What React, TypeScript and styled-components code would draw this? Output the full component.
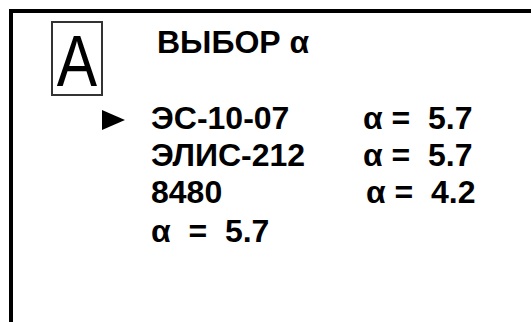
import styled, { createGlobalStyle } from "styled-components";

interface Row {
  name: string;
  value: string;
  selected?: boolean;
  shift?: number;
}

const rows: Row[] = [
  { name: "ЭС-10-07", value: "α =  5.7", selected: true },
  { name: "ЭЛИС-212", value: "α =  5.7" },
  { name: "8480", value: "α =  4.2", shift: 3 },
];

const App = () => {
  return (
    <>
      <GlobalStyle />
      <Frame>
        <Header>
          <ModeBox>
            <ModeLetter>A</ModeLetter>
          </ModeBox>
          <Title>ВЫБОР α</Title>
        </Header>
        <List>
          {rows.map((row) => (
            <ListRow key={row.name}>
              <Marker>
                {row.selected && (
                  <svg width="23" height="20" viewBox="0 0 23 20">
                    <polygon points="0,0 23,10 0,20" fill="#000" />
                  </svg>
                )}
              </Marker>
              <Cell>{row.name}</Cell>
              <Cell $shift={row.shift ?? 0}>{row.value}</Cell>
            </ListRow>
          ))}
          <Current>α  =  5.7</Current>
        </List>
      </Frame>
    </>
  );
};

const GlobalStyle = createGlobalStyle`
  html, body {
    margin: 0;
    padding: 0;
    background: #fff;
    overflow: hidden;
  }
  body {
    font-family: "Liberation Sans", Arial, sans-serif;
    color: #000;
  }
`;

const Frame = styled.div`
  margin: 9px 0 0 9px;
  width: 522px;
  height: 313px;
  border-top: 4px solid #000;
  border-left: 4px solid #000;
  box-sizing: border-box;
  padding: 8px 0 0 38px;
`;

const Header = styled.div`
  display: flex;
  align-items: flex-start;
`;

const ModeBox = styled.div`
  width: 52px;
  height: 75px;
  box-sizing: border-box;
  border: 2px solid #333;
  display: flex;
  align-items: center;
  justify-content: center;
`;

const ModeLetter = styled.span`
  font-size: 72px;
  line-height: 72px;
  font-weight: 400;
  transform: scaleX(0.84);
  margin-top: 4px;
`;

const Title = styled.h1`
  margin: 4px 0 0 54px;
  font-size: 32px;
  line-height: 34px;
  font-weight: 700;
`;

const List = styled.div`
  margin: 4px 0 0 51px;
  display: grid;
  grid-template-columns: 49px 212px auto;
  font-size: 32px;
  font-weight: 700;
  line-height: 37px;
`;

const ListRow = styled.div`
  display: contents;
`;

const Marker = styled.div`
  display: flex;
  align-items: center;
  padding-top: 2px;
`;

const Cell = styled.div<{ $shift?: number }>`
  white-space: pre;
  padding-left: ${({ $shift }) => $shift ?? 0}px;
`;

const Current = styled.div`
  grid-column: 2 / 4;
  margin-top: 2px;
  white-space: pre;
`;

export default App;
